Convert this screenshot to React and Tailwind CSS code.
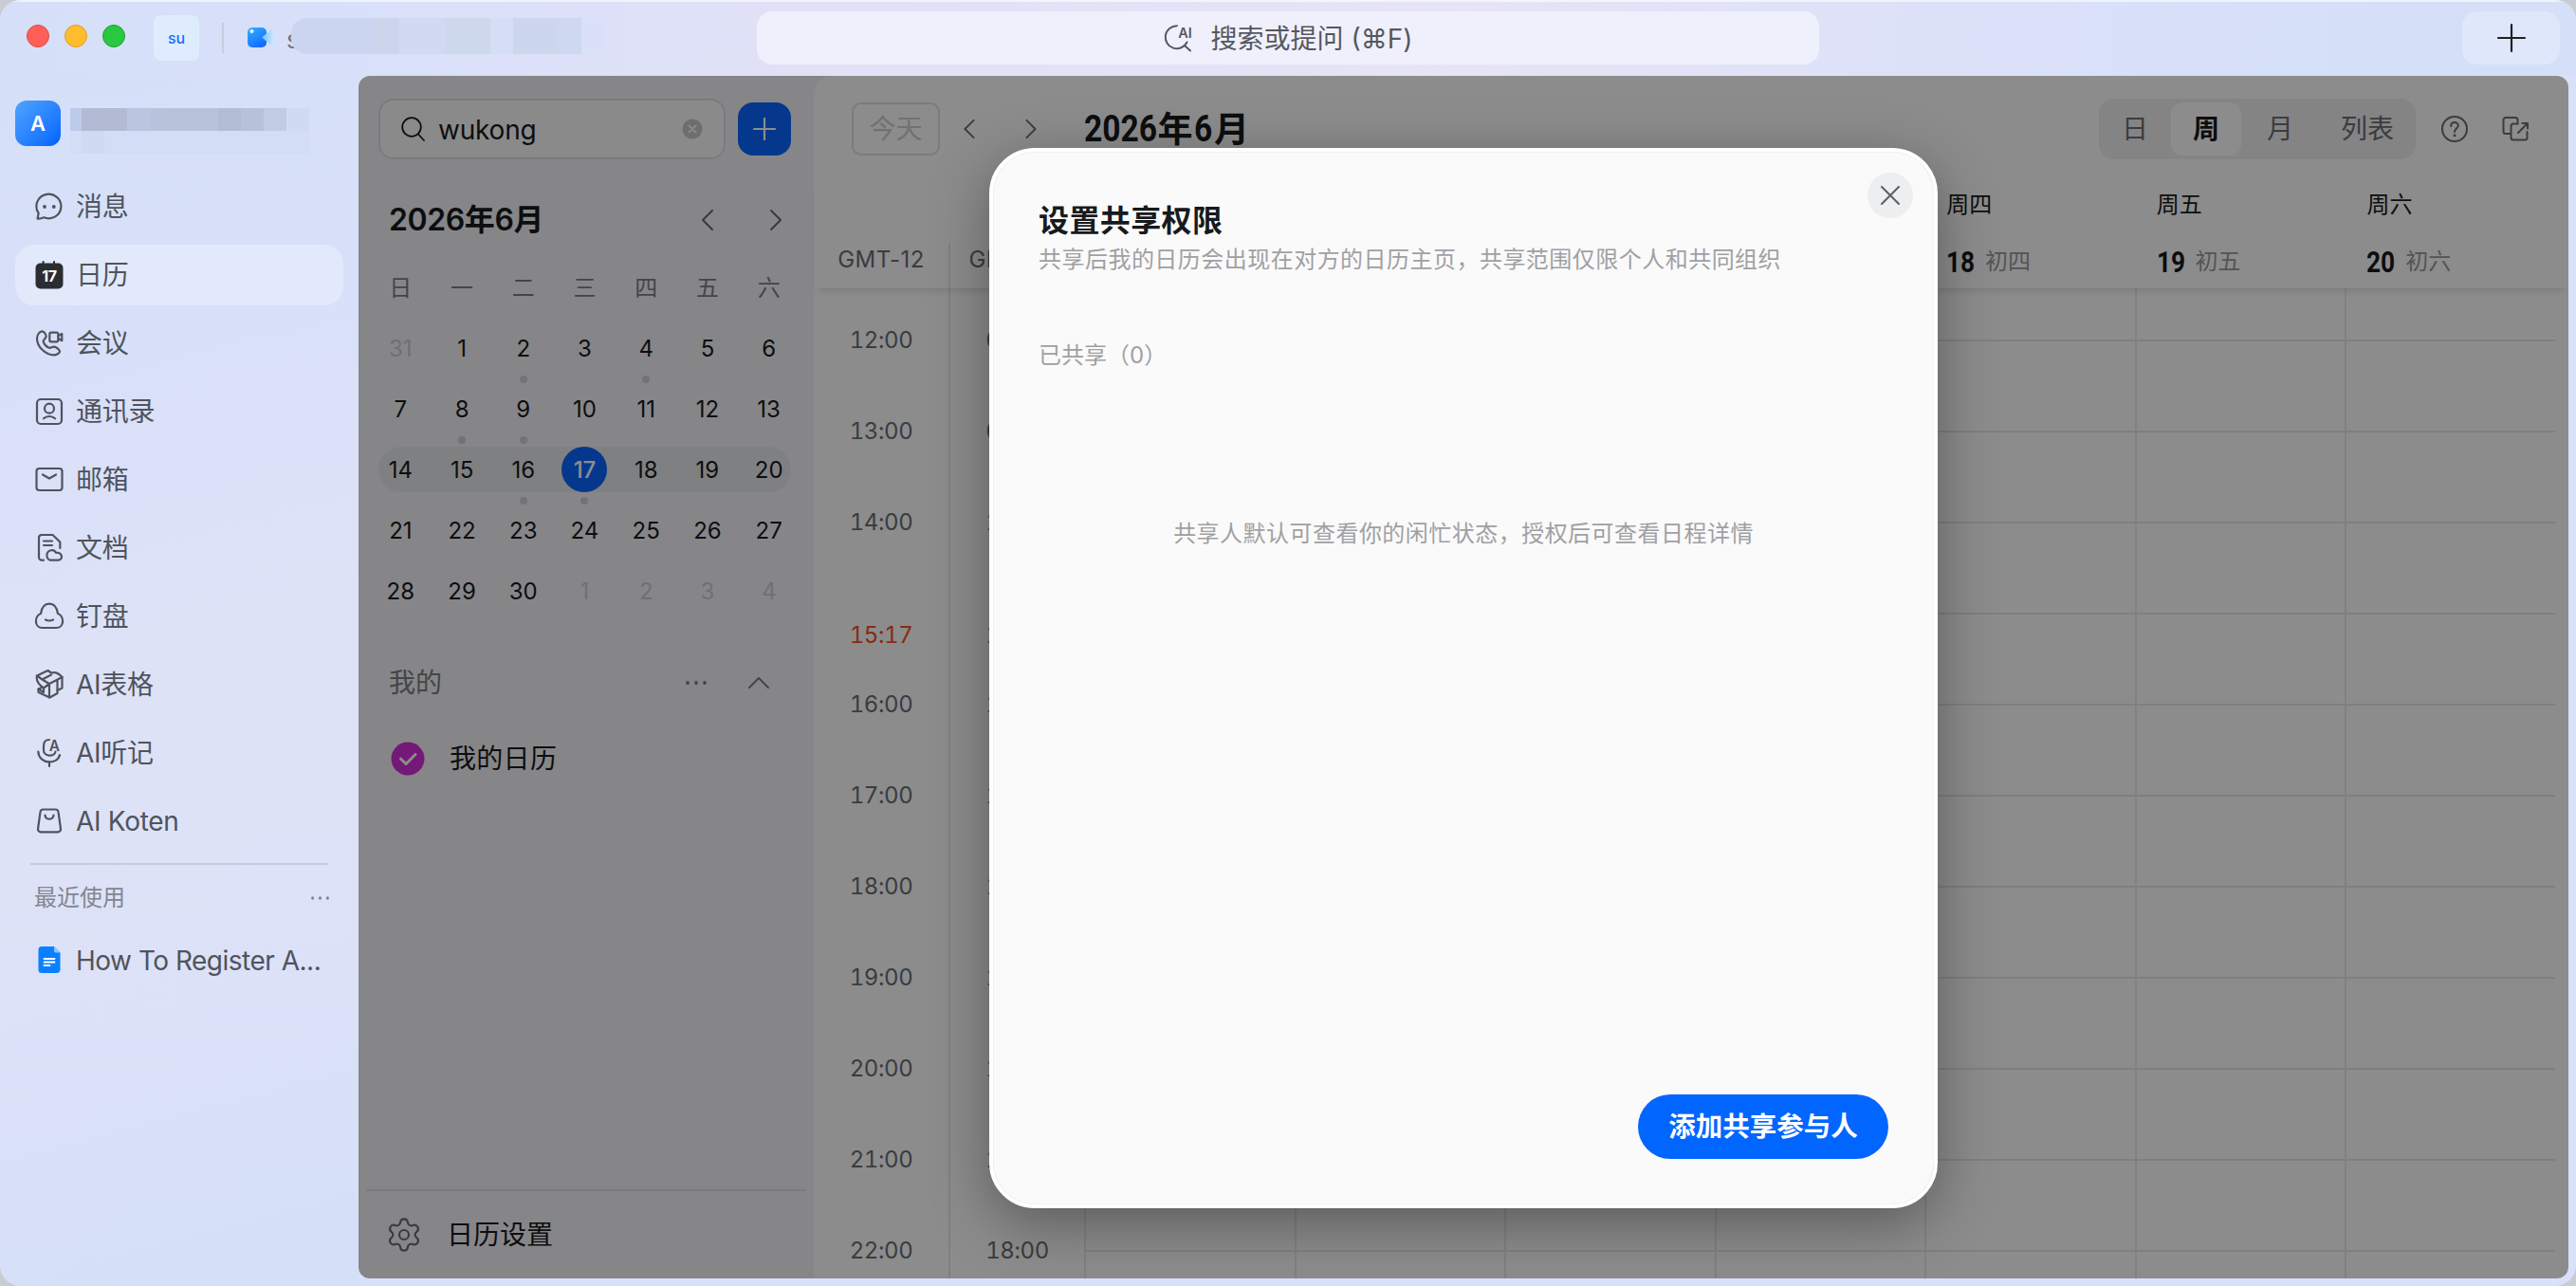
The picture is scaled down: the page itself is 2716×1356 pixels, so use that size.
import React from 'react';
import { Settings } from 'lucide-react';

const navItems = [
  { name: '消息', icon: 'chat' },
  { name: '日历', icon: 'calendar', active: true },
  { name: '会议', icon: 'meeting' },
  { name: '通讯录', icon: 'contacts' },
  { name: '邮箱', icon: 'mail' },
  { name: '文档', icon: 'docs' },
  { name: '钉盘', icon: 'drive' },
  { name: 'AI表格', icon: 'table' },
  { name: 'AI听记', icon: 'mic' },
  { name: 'AI Koten', icon: 'bag' },
];

const weekdays = ['日', '一', '二', '三', '四', '五', '六'];

const monthRows = [
  [31, 1, 2, 3, 4, 5, 6],
  [7, 8, 9, 10, 11, 12, 13],
  [14, 15, 16, 17, 18, 19, 20],
  [21, 22, 23, 24, 25, 26, 27],
  [28, 29, 30, 1, 2, 3, 4],
];
const dotted = ['0-2', '0-4', '1-1', '1-2', '2-2', '2-3'];

// the dialog covers Sunday to Wednesday, so only the rest get a heading
const dayHeadings = [
  { name: '周四', date: 18, lunar: '初四', col: 'col-start-5' },
  { name: '周五', date: 19, lunar: '初五', col: 'col-start-6' },
  { name: '周六', date: 20, lunar: '初六', col: 'col-start-7' },
];

const westTimes = ['12:00', '13:00', '14:00', '15:17', '16:00', '17:00', '18:00', '19:00', '20:00', '21:00', '22:00'];
const eastTimes = ['08:00', '09:00', '10:00', '11:17', '12:00', '13:00', '14:00', '15:00', '16:00', '17:00', '18:00'];

const iconShapes = {
  chat: (
    <>
      <path d="M3.600 28.600L4.600 22.600A13 12.800 0 1 1 10.400 27.300Q7 28.800 3.600 28.600Z" />
      <circle cx="11" cy="16" r="1.9" fill="currentColor" stroke="none" />
      <circle cx="20.800" cy="16" r="1.9" fill="currentColor" stroke="none" />
    </>
  ),
  calendar: (
    <g stroke="none">
      <rect x="1.500" y="3.500" width="29" height="27" rx="5" fill="#2b2d30" />
      <rect x="8.600" y="1" width="2" height="5" rx="1" fill="#2b2d30" />
      <rect x="20" y="1" width="2" height="5" rx="1" fill="#2b2d30" />
      <text x="16" y="23" textAnchor="middle" fontSize="16" fontWeight="700" fill="#fff">17</text>
    </g>
  ),
  meeting: (
    <>
      <path d="M7.5 3.600c2.400-.9 5.200 2.700 5.200 5 0 2.400-3.600 3.400-2.900 6 .9 2.600 2.600 4.600 5.400 6 2.400 1.200 3.500-1.500 6-1 2.300.5 5.800 3 5.800 5s-3.700 3.800-6.200 3.800C12.500 28.400 3 20 3 11c0-3.200 1.800-6.500 4.500-7.400z" />
      <rect x="16.300" y="4.700" width="9" height="9.600" rx="1.500" />
      <path d="M25.300 8.200L29.300 6V13.200L25.300 10.800" />
    </>
  ),
  contacts: (
    <>
      <rect x="3" y="3" width="26" height="26" rx="4" />
      <circle cx="16" cy="12.700" r="5" />
      <path d="M10 23.300C13 20.200 19 20.200 22 23.300" />
    </>
  ),
  mail: (
    <>
      <rect x="2.500" y="4" width="27" height="23" rx="3" />
      <path d="M9 10.500L16 14.500L23 10.500" />
    </>
  ),
  docs: (
    <>
      <path d="M10 28.700H8A3 3 0 0 1 5 25.700V5A3 3 0 0 1 8 2H19.500L27.300 9.500V16" />
      <path d="M10 8.500H19M10 13H19" />
      <path d="M17 28.700A5 5 0 0 1 13.500 23C14 17.500 21 16.500 23 20.800C27 20.500 29 22.500 29 25A3.500 3.500 0 0 1 25.500 28.700Z" />
    </>
  ),
  drive: (
    <>
      <path d="M9 28C-.5 28 .3 15.500 7 13C8.200 5 12 2.600 16 2.600S23.800 5 25 13C31.700 15.500 32.500 28 23 28Z" />
      <path d="M12 19.500Q16 21.500 20 19.500" />
    </>
  ),
  table: (
    <>
      <path d="M3 6.500L14.500 1L18 3.500Q24 1.500 29.500 8V19.500L24.500 22V25L16.500 29.500L4.500 24V20.500L8 19" />
      <path d="M3 6.500C1.500 12 6 16.500 10 19.500V24L4.500 20.500M3 6.500L8.500 10.500L18 5.500M8.500 10.500L16 15L29.500 8M16 15V29.500M16 15L10 19.500M24.500 10.500V22" />
    </>
  ),
  mic: (
    <>
      <path d="M16 2C11.500 2 10 5 10 8.500V13C10 20 21.500 20.500 22.500 14.500" />
      <path d="M4.300 14.500C5 28.500 25 28.500 27 18M16 25V30" />
      <text x="21.300" y="13.500" textAnchor="middle" fontSize="15.500" fontWeight="600" fill="currentColor" stroke="none">A</text>
    </>
  ),
  bag: (
    <>
      <path d="M9.500 3.500H22.500A3 3 0 0 1 25.500 6.200L28 24A3 3 0 0 1 25 27.300H7A3 3 0 0 1 4 24L6.500 6.200A3 3 0 0 1 9.500 3.500Z" />
      <path d="M11.500 9.500C12 15 20 15 20.500 9.500" />
    </>
  ),
};

function NavIcon({ name }) {
  return (
    <svg className="w-8 h-8 shrink-0" viewBox="0 0 32 32" fill="none" stroke="currentColor" strokeWidth="2.200" strokeLinecap="round" strokeLinejoin="round">
      {iconShapes[name]}
    </svg>
  );
}

function Chevron({ dir, className }) {
  const d = { left: 'M17 2L7 12L17 22', right: 'M7 2L17 12L7 22', up: 'M2 17L12 7L22 17' }[dir];
  return (
    <svg className={className} viewBox="0 0 24 24" fill="none" stroke="currentColor" strokeWidth="2" strokeLinecap="round" strokeLinejoin="round">
      <path d={d} />
    </svg>
  );
}

function Dots({ className }) {
  return (
    <svg className={className} viewBox="0 0 24 6" fill="currentColor">
      <circle cx="3" cy="3" r="1.900" />
      <circle cx="12" cy="3" r="1.900" />
      <circle cx="21" cy="3" r="1.900" />
    </svg>
  );
}

function TitleBar() {
  return (
    <header className="flex h-20 shrink-0 items-start border-t-2 border-white/60 bg-[linear-gradient(90deg,#d5e0f8_0%,#d9e0f9_14%,#e0e1f7_30%,#e6e4f6_57%,#d9e0f9_82%,#d5e0f8_92%)]">
      <div className="flex w-[798px] h-[72px] items-center pl-7">
        <div className="flex gap-4">
          <span className="w-6 h-6 rounded-full border border-[#e2463f] bg-[#ff5f57]" />
          <span className="w-6 h-6 rounded-full border border-[#e0a128] bg-[#febc2e]" />
          <span className="w-6 h-6 rounded-full border border-[#1ea133] bg-[#28c840]" />
        </div>
        <div className="ml-[30px] mt-1 flex w-12 h-12 items-center justify-center rounded-lg bg-[#dfecfe] text-[16px] font-medium text-[#1a6aff]">su</div>
        <span className="ml-6 mt-1 w-[2px] h-8 bg-[#c6cede]" />
        <svg className="ml-[25px] w-7 h-7" viewBox="0 0 28 28">
          <defs>
            <linearGradient id="cam" x1="0" y1="0" x2="0.6" y2="1">
              <stop offset="0" stopColor="#35b1ff" />
              <stop offset="1" stopColor="#126bff" />
            </linearGradient>
            <linearGradient id="lens" x1="0" y1="0" x2="1" y2="0">
              <stop offset="0" stopColor="#6fbcff" />
              <stop offset="1" stopColor="#c5e8ff" />
            </linearGradient>
          </defs>
          <rect x="0" y="5" width="20" height="21" rx="5" fill="url(#cam)" />
          <path d="M15 15.500L25 7Q27 6 27 8V23Q27 25 25 23.500Z" fill="url(#lens)" />
          <circle cx="4.500" cy="9" r="2" fill="#e4f6ff" />
        </svg>
        <span className="ml-[13px] mt-2 text-[26px] leading-none text-[#6f7682]">s</span>
        <div className="-ml-[9px] flex h-[38px] overflow-hidden rounded-l-2xl">
          <span className="w-[90px] bg-[#ccd5ef]" />
          <span className="w-6 bg-[#cdd5ec]" />
          <span className="w-12 bg-[#d1daf0]" />
          <span className="w-12 bg-[#ced8ec]" />
          <span className="w-6 bg-[#d5def4]" />
          <span className="w-12 bg-[#ccd6ec]" />
          <span className="w-6 bg-[#ced8ef]" />
          <span className="w-6 bg-[#dae0f7]" />
        </div>
      </div>
      <div className="mt-[10px] flex w-[1120px] h-14 items-center justify-center rounded-2xl bg-[#f3f4fd]/75 text-[28px] leading-none text-[#55585f]">
        <svg className="w-8 h-8 mr-[18px]" viewBox="0 0 32 32" fill="none" stroke="currentColor" strokeWidth="2" strokeLinecap="round">
          <path d="M14 3.200A12 12 0 1 0 24.500 20.500M22 24L28 29.500M24.500 20.500L22.500 23.500" />
          <text x="22.500" y="15.500" textAnchor="middle" fontSize="14.500" fontWeight="600" fill="currentColor" stroke="none">AI</text>
        </svg>
        <span className="pt-[2px]">搜索或提问 (⌘F)</span>
      </div>
      <button className="ml-auto mr-[17px] mt-[10px] flex w-[103px] h-14 items-center justify-center rounded-2xl bg-[#dfe8fb]">
        <svg className="w-8 h-8" viewBox="0 0 32 32" stroke="#1f2124" strokeWidth="2.200" strokeLinecap="round">
          <path d="M16 2V30M2 16H30" />
        </svg>
      </button>
    </header>
  );
}

function Sidebar() {
  return (
    <aside className="flex w-[378px] shrink-0 flex-col bg-[linear-gradient(165deg,#d5e0f8_0%,#d9e0f9_25%,#dde2f7_45%,#dee2f7_62%,#dae1f8_80%,#d5e0f8_94%)] text-[#4f545d]">
      <div className="mt-[26px] ml-4 flex h-12 items-start">
        <div className="flex w-12 h-12 items-center justify-center rounded-xl bg-linear-to-br from-[#4fa4ff] to-[#0062ff] text-[22px] font-semibold text-white">A</div>
        <div className="ml-[10px] mt-2">
          <div className="flex h-6">
            <span className="w-3 bg-[#bccaec]" />
            <span className="w-12 bg-[#b2bbd3]" />
            <span className="w-6 bg-[#bbc5e0]" />
            <span className="w-[72px] bg-[#b8c3db]" />
            <span className="w-6 bg-[#b1bcd5]" />
            <span className="w-6 bg-[#b7c1d9]" />
            <span className="w-6 bg-[#c1cbe1]" />
            <span className="w-6 bg-[#d0daf3]" />
          </div>
          <div className="flex h-6">
            <span className="w-3 bg-[#d3def6]" />
            <span className="w-6 bg-[#cfdaf3]" />
            <span className="w-[216px] bg-[#d3ddf6]" />
          </div>
        </div>
      </div>
      <nav className="mt-8 ml-4 flex w-[346px] flex-col gap-2">
        {navItems.map(item => (
          <div key={item.name} className={`flex h-16 items-center gap-3 rounded-[20px] pl-5 text-[28px] leading-none tracking-[-0.3px] ${item.active ? 'bg-[#e1e9fb]' : ''}`}>
            <NavIcon name={item.icon} />
            <span>{item.name}</span>
          </div>
        ))}
      </nav>
      <div className="mx-8 mt-[12px] h-[2px] bg-[#c7cddf]" />
      <div className="mt-[19px] flex h-8 items-center justify-between pl-9 pr-[30px] text-[24px] leading-none text-[#82868f]">
        <span>最近使用</span>
        <Dots className="w-[21px] h-[6px]" />
      </div>
      <div className="mt-[34px] ml-9 flex h-8 items-center gap-3 text-[28px] leading-none tracking-[-0.5px]">
        <svg className="w-8 h-8" viewBox="0 0 32 32">
          <path d="M8 1H21L27.500 7.500V25.500A4 4 0 0 1 23.500 29H8A3.500 3.500 0 0 1 4.500 25.500V4.500A3.500 3.500 0 0 1 8 1Z" fill="#0b80ff" />
          <path d="M21 1L27.500 7.500H23A2 2 0 0 1 21 5.500Z" fill="#8cc4ff" />
          <path d="M10.500 14H21.500M10.500 17.500H21.500M10.500 21H16.500" stroke="#fff" strokeWidth="1.800" strokeLinecap="round" />
        </svg>
        <span>How To Register A...</span>
      </div>
    </aside>
  );
}

function MonthGrid() {
  return (
    <div className="ml-3 w-[453px]">
      <div className="mt-[20px] grid h-12 grid-cols-7 items-center text-center text-[24px] leading-none text-[#7b7e84]">
        {weekdays.map(d => <span key={d}>{d}</span>)}
      </div>
      <div className="mt-[7px]">
        {monthRows.map((row, r) => (
          <div key={r} className="relative flex h-16 items-center">
            {r === 2 && <div className="absolute inset-x-[9px] inset-y-2 rounded-full bg-[#e8eaed]" />}
            <div className="relative grid h-12 w-full grid-cols-7 text-[24px] leading-none">
              {row.map((day, c) => {
                const faded = (r === 0 && c === 0) || (r === 4 && c > 2);
                const today = r === 2 && c === 3;
                return (
                  <div key={c} className="relative flex items-center justify-center">
                    <span className={`flex w-12 h-12 items-center justify-center rounded-full pt-[2px] ${today ? 'bg-[#0a66ff] font-medium text-white' : faded ? 'text-[#cbcdd1]' : 'text-[#171a1d]'}`}>{day}</span>
                    {dotted.includes(`${r}-${c}`) && <i className="absolute -bottom-[13px] w-2 h-2 rounded-full bg-[#d0d1d6]" />}
                  </div>
                );
              })}
            </div>
          </div>
        ))}
      </div>
    </div>
  );
}

function CalendarPanel() {
  return (
    <section className="flex w-[480px] shrink-0 flex-col text-[#171a1d]">
      <div className="mt-6 flex items-center pl-[21px]">
        <div className="flex w-[366px] h-16 items-center rounded-2xl border-2 border-[#e0e1e4] bg-[#fcfcfd] pl-[22px] pr-[22px] text-[28px] leading-none">
          <svg className="w-[26px] h-[26px]" viewBox="0 0 26 26" fill="none" stroke="currentColor" strokeWidth="1.800" strokeLinecap="round">
            <circle cx="11" cy="11" r="9.800" />
            <path d="M18 18.500L24 25" />
          </svg>
          <span className="ml-[13px] pt-px tracking-[-0.2px]">wukong</span>
          <svg className="ml-auto w-[22px] h-[22px]" viewBox="0 0 22 22">
            <circle cx="11" cy="11" r="10.500" fill="#c8c9cc" />
            <path d="M7.500 7.500L14.500 14.500M14.500 7.500L7.500 14.500" stroke="#fcfcfd" strokeWidth="2" strokeLinecap="round" />
          </svg>
        </div>
        <button className="ml-[13px] flex w-14 h-14 items-center justify-center rounded-2xl bg-[#0a66ff]">
          <svg className="w-6 h-6" viewBox="0 0 24 24" stroke="#fff" strokeWidth="2.200" strokeLinecap="round">
            <path d="M12 1V23M1 12H23" />
          </svg>
        </button>
      </div>
      <div className="mt-9 flex h-14 items-center pl-8 pr-[28px]">
        <h2 className="text-[32px] leading-none font-semibold tracking-[-0.4px]">2026年6月</h2>
        <div className="ml-auto flex gap-[48px] text-[#66696e]">
          <Chevron dir="left" className="w-6 h-6" />
          <Chevron dir="right" className="w-6 h-6" />
        </div>
      </div>
      <MonthGrid />
      <div className="mt-[37px] flex h-14 items-center pl-8 pr-[46px] text-[28px] leading-none text-[#7b7e84]">
        <span>我的</span>
        <Dots className="ml-auto w-[24px] h-[6px]" />
        <Chevron dir="up" className="ml-[42px] w-6 h-6" />
      </div>
      <div className="mt-6 flex h-14 items-center pl-[34px] text-[28px] leading-none">
        <svg className="w-9 h-9" viewBox="0 0 36 36" fill="none">
          <circle cx="18" cy="18" r="17.500" fill="#d42fd8" />
          <path d="M10.500 18L16 23.500L26 13.500" stroke="#fff" strokeWidth="3" strokeLinecap="round" strokeLinejoin="round" />
        </svg>
        <span className="ml-[26px] tracking-[0.3px]">我的日历</span>
      </div>
      <div className="mx-2 mt-auto flex h-[94px] items-center border-t-2 border-[#e0e1e4] pl-5 text-[28px] leading-none">
        <Settings className="w-10 h-10 text-[#6b6e73]" strokeWidth={1.3} />
        <span className="ml-[25px]">日历设置</span>
      </div>
    </section>
  );
}

function Toolbar() {
  return (
    <div className="flex h-28 shrink-0 items-center pl-10 pr-[41px] text-[28px] leading-none text-[#6b6e73]">
      <button className="flex w-[93px] h-14 items-center justify-center rounded-[10px] border-2 border-[#dfe0e2] leading-none text-[#cdced1]">今天</button>
      <Chevron dir="left" className="ml-[20px] w-[22px] h-[22px]" />
      <Chevron dir="right" className="ml-[43px] w-[22px] h-[22px]" />
      <h1 className="ml-[45px] flex items-center text-[37px] font-bold text-[#171a1d]">
        <span className="-mr-[12px] origin-left scale-x-[0.86] font-[Roboto,sans-serif] text-[39px]">2026</span>
        <span>年</span>
        <span className="ml-px -mr-px origin-left scale-x-[0.86] font-[Roboto,sans-serif] text-[39px]">6</span>
        <span>月</span>
      </h1>
      <div className="ml-auto flex h-16 w-[334px] items-center rounded-2xl bg-[#f0f0f1]">
        <span className="w-[76px] text-center">日</span>
        <span className="flex w-[74px] h-14 items-center justify-center rounded-xl bg-white font-bold text-[#171a1d]">周</span>
        <span className="w-[82px] text-center">月</span>
        <span className="w-[102px] text-center">列表</span>
      </div>
      <svg className="ml-[26px] w-[30px] h-[30px]" viewBox="0 0 30 30" fill="none" stroke="currentColor" strokeWidth="2" strokeLinecap="round">
        <circle cx="15" cy="15" r="13" />
        <path d="M11.200 12C11.200 6.500 19 7 18.800 11.500C18.600 14.500 15 14.500 15 18" />
        <circle cx="15" cy="21.800" r="1.500" fill="currentColor" stroke="none" />
      </svg>
      <svg className="ml-[34px] w-[30px] h-[30px]" viewBox="0 0 30 30" fill="none" stroke="currentColor" strokeWidth="2" strokeLinecap="round" strokeLinejoin="round">
        <path d="M10 20H5A2.500 2.500 0 0 1 2.500 17.500V5.500A2.500 2.500 0 0 1 5 3H15A2.500 2.500 0 0 1 17.500 5.500V9.500" />
        <path d="M17.500 9.500H13A2.500 2.500 0 0 0 10.500 12V24A2.500 2.500 0 0 0 13 26.500H25A2.500 2.500 0 0 0 27.500 24V18" />
        <path d="M18 19L28 9M22.500 9H28V14.500" />
      </svg>
    </div>
  );
}

function TimeColumn({ times, className }) {
  return (
    <div className={className}>
      {times.map(t => (
        <div key={t} className={`flex h-24 shrink-0 items-center justify-center tabular-nums tracking-[-0.4px] ${t.endsWith(':17') ? 'pt-[46px] text-[#f5511e]' : ''}`}>{t}</div>
      ))}
    </div>
  );
}

function WeekView() {
  return (
    <section className="flex min-w-0 grow flex-col rounded-tl-[20px] bg-white text-[#6b6e73]">
      <Toolbar />
      <div className="z-10 flex h-28 shrink-0 bg-white text-[24px] leading-none shadow-[0_7px_8px_-5px_rgba(0,0,0,0.14)]">
        <div className="flex w-[285px] shrink-0 items-end tracking-[0.5px]">
          <span className="flex w-[144px] h-12 items-start justify-center border-r-2 border-[#e8e9eb] pt-[6px]">GMT-12</span>
          <span className="flex w-[141px] h-12 items-start justify-center pt-[6px]">GMT+08</span>
        </div>
        <div className="grid w-[1551px] grid-cols-7">
          {dayHeadings.map(d => (
            <div key={d.date} className={`pl-[23px] pt-3 ${d.col}`}>
              <div className="text-[#171a1d]">{d.name}</div>
              <div className="mt-8 flex h-8 items-center">
                <span className="-mr-[8px] origin-left scale-x-[0.82] font-[Roboto,sans-serif] text-[32px] font-bold text-[#171a1d]">{d.date}</span>
                <span className="ml-[12px] text-[#989a9e]">{d.lunar}</span>
              </div>
            </div>
          ))}
        </div>
      </div>
      <div className="flex min-h-0 grow overflow-hidden text-[24px] leading-none">
        <TimeColumn times={westTimes} className="w-[144px] shrink-0 border-r-2 border-[#e8e9eb] pt-[7px]" />
        <TimeColumn times={eastTimes} className="w-[141px] shrink-0 pt-[7px]" />
        <div className="grid w-[1551px] shrink-0 grid-cols-7">
          {weekdays.map(d => (
            <div key={d} className="border-l-2 border-[#eaebec]">
              <div className="h-14 border-b-2 border-[#e6e7e8]" />
              {westTimes.map(t => <div key={t} className="h-24 border-b-2 border-[#e6e7e8]" />)}
            </div>
          ))}
        </div>
      </div>
    </section>
  );
}

function ShareDialog() {
  return (
    <div className="mt-[2px] flex w-[1000px] h-[1118px] flex-col rounded-[48px] border-[4px] border-white bg-[#fafafa] shadow-[0_16px_60px_rgba(0,0,0,0.35),inset_0_0_1px_rgba(0,0,0,0.3)]">
      <div className="flex h-[72px] justify-end pt-[22px] pr-[22px]">
        <button className="flex w-12 h-12 items-center justify-center rounded-full bg-[#eceef0]">
          <svg className="w-5 h-5" viewBox="0 0 20 20" stroke="#5c5f63" strokeWidth="2" strokeLinecap="round">
            <path d="M1 1L19 19M19 1L1 19" />
          </svg>
        </button>
      </div>
      <div className="-mt-[15px] px-[48px] leading-none text-[#9fa0a3]">
        <h3 className="text-[32px] leading-[32px] font-bold tracking-[0.4px] text-[#171a1d]">设置共享权限</h3>
        <p className="mt-[13px] text-[24px] tracking-[0.47px] leading-[24px]">共享后我的日历会出现在对方的日历主页，共享范围仅限个人和共同组织</p>
        <p className="mt-[77px] text-[24px] leading-[24px]">已共享（0）</p>
        <p className="mt-[164px] text-center text-[24px] tracking-[0.47px] leading-[24px]">共享人默认可查看你的闲忙状态，授权后可查看日程详情</p>
      </div>
      <div className="mt-auto flex justify-end pb-12 pr-12">
        <button className="flex w-[264px] h-[68px] items-center justify-center rounded-full bg-[#0066ff] text-[28.500px] leading-none font-bold text-white">添加共享参与人</button>
      </div>
    </div>
  );
}

export default function App() {
  return (
    <div className="h-[1356px] w-[2716px] overflow-hidden bg-[#c9ccd2] font-[Inter,'Noto_Sans_CJK_SC',sans-serif]">
      <div className="flex h-full flex-col overflow-hidden rounded-[22px] bg-[#d9e0f9]">
        <TitleBar />
        <div className="-mb-2 flex min-h-0 grow pr-2">
          <Sidebar />
          <main className="relative mb-4 flex min-w-0 grow overflow-hidden rounded-xl bg-[#f4f4f7]">
            <CalendarPanel />
            <WeekView />
            <div className="absolute inset-0 z-20 flex items-center justify-center bg-black/45">
              <ShareDialog />
            </div>
          </main>
        </div>
      </div>
    </div>
  );
}
